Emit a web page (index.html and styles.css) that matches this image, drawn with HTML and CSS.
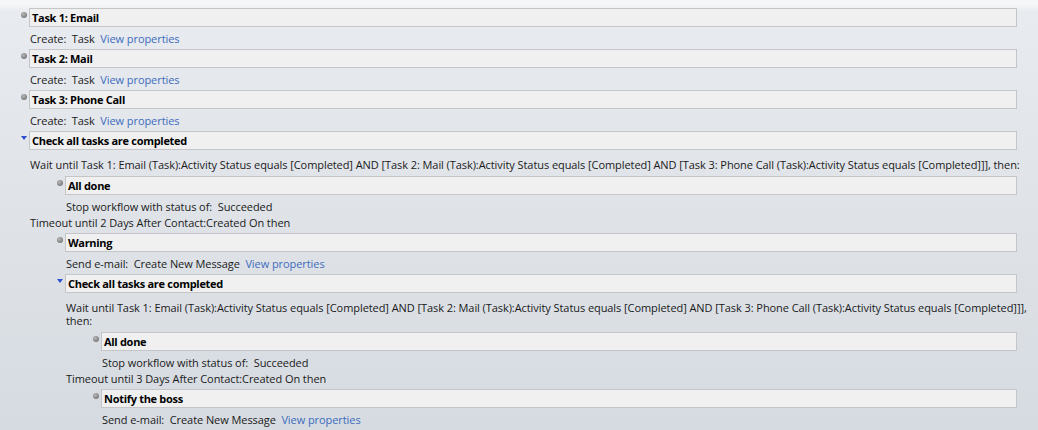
FILE: index.html
```
<!DOCTYPE html>
<html lang="en">
<head>
  <meta charset="UTF-8">
  <title>Process steps</title>
  <link rel="stylesheet" href="styles.css">
</head>
<body>
  <div class="flow">

    <div class="step">
      <div class="step-head"><span class="bullet"></span>Task 1: Email</div>
      <div class="line">Create:&nbsp; Task&nbsp; <a class="link" href="#">View properties</a></div>
    </div>

    <div class="step">
      <div class="step-head"><span class="bullet"></span>Task 2: Mail</div>
      <div class="line">Create:&nbsp; Task&nbsp; <a class="link" href="#">View properties</a></div>
    </div>

    <div class="step">
      <div class="step-head"><span class="bullet"></span>Task 3: Phone Call</div>
      <div class="line">Create:&nbsp; Task&nbsp; <a class="link" href="#">View properties</a></div>
    </div>

    <div class="step">
      <div class="step-head"><span class="toggle"></span>Check all tasks are completed</div>
      <p class="cond">Wait until Task 1: Email (Task):Activity Status equals [Completed] AND [Task 2: Mail (Task):Activity Status equals [Completed] AND [Task 3: Phone Call (Task):Activity Status equals [Completed]]], then:</p>

      <div class="nested">
        <div class="step">
          <div class="step-head"><span class="bullet"></span>All done</div>
          <div class="line">Stop workflow with status of:&nbsp; Succeeded</div>
        </div>
      </div>

      <div class="line">Timeout until 2 Days After Contact:Created On then</div>

      <div class="nested">
        <div class="step">
          <div class="step-head"><span class="bullet"></span>Warning</div>
          <div class="line">Send e-mail:&nbsp; Create New Message&nbsp; <a class="link" href="#">View properties</a></div>
        </div>

        <div class="step">
          <div class="step-head"><span class="toggle"></span>Check all tasks are completed</div>
          <p class="cond">Wait until Task 1: Email (Task):Activity Status equals [Completed] AND [Task 2: Mail (Task):Activity Status equals [Completed] AND [Task 3: Phone Call (Task):Activity Status equals [Completed]]], then:</p>

          <div class="nested">
            <div class="step">
              <div class="step-head"><span class="bullet"></span>All done</div>
              <div class="line">Stop workflow with status of:&nbsp; Succeeded</div>
            </div>
          </div>

          <div class="line">Timeout until 3 Days After Contact:Created On then</div>

          <div class="nested">
            <div class="step">
              <div class="step-head"><span class="bullet"></span>Notify the boss</div>
              <div class="line">Send e-mail:&nbsp; Create New Message&nbsp; <a class="link" href="#">View properties</a></div>
            </div>
          </div>
        </div>
      </div>
    </div>

  </div>
</body>
</html>
```

FILE: styles.css
```
html, body { height: 100%; }
body {
  margin: 0;
  font-family: "Open Sans", "Noto Sans", Arial, sans-serif;
  font-size: 11px;
  letter-spacing: -0.07px;
  color: #1a1a1a;
  background: linear-gradient(#f4f6f8 0, #f4f6f8 4px, #e8ebef 12px, #d6dbe1 100%);
  overflow: hidden;
}

.flow {
  padding: 6px 0 0 29px;
  width: 1001px;
}

.step { padding-top: 2px; }

.step-head {
  position: relative;
  height: 17px;
  line-height: 17px;
  margin-right: 13px;
  padding-left: 2px;
  background: #f0f0f0;
  border: 1px solid #c4c6c8;
  font-weight: bold;
  letter-spacing: -0.3px;
  color: #000;
}

.bullet {
  position: absolute;
  left: -9px;
  top: 3px;
  width: 6px;
  height: 6px;
  border-radius: 50%;
  background: radial-gradient(circle at 40% 35%, #b8b8b8, #7c7c7c 70%);
}

.toggle {
  position: absolute;
  left: -9px;
  top: 4px;
  width: 0;
  height: 0;
  border-left: 3px solid transparent;
  border-right: 3px solid transparent;
  border-top: 4px solid #2d4fd0;
}

.line {
  padding: 4px 0 0 1px;
  height: 16px;
  line-height: 16px;
  white-space: nowrap;
}
.step > .nested + .line,
.step > .cond + .line { padding-top: 0; }

.cond {
  margin: 0;
  padding: 8px 0 3px 1px;
  line-height: 13px;
}

.nested { margin-left: 36px; }

.link {
  color: #3d6bbd;
  text-decoration: none;
}
```
